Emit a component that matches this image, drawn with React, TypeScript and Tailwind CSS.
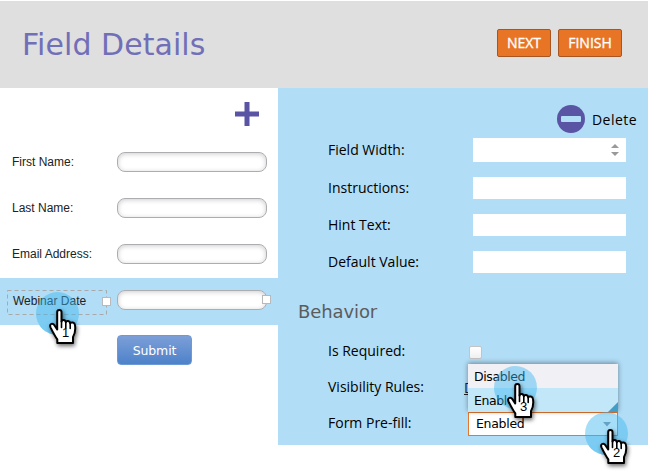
import React from "react";

const sans = "font-['Open_Sans','Noto_Sans',sans-serif]";
const wide = "font-['DejaVu_Sans',sans-serif]";
const helv = "font-['Liberation_Sans',Arial,sans-serif]";

function TopButton({ label, size }: { label: string; size: string }) {
  return (
    <button
      className={`${sans} ${size} flex h-7 items-center justify-center rounded-[2px] border border-[#a85521] bg-[#e87525] text-[14px] leading-none text-white [-webkit-text-stroke:0.35px_#fff]`}
    >
      {label}
    </button>
  );
}

function FormInput() {
  return (
    <div className="h-5 w-[150px] rounded-[8px] border border-[#acacb1] bg-white shadow-[inset_0_1px_5px_rgba(0,0,0,0.2)]" />
  );
}

function FormRow({ label }: { label: string }) {
  return (
    <div className={`${helv} flex h-[46px] items-center pl-3 text-[12px] text-[#222]`}>
      <span className="w-[105px] whitespace-nowrap">{label}</span>
      <FormInput />
    </div>
  );
}

function PropertyRow({
  label,
  height,
  children,
}: {
  label: string;
  height: string;
  children: React.ReactNode;
}) {
  return (
    <div className={`flex items-center ${height}`}>
      <span className={`${sans} w-[145px] shrink-0 text-[14px] leading-none whitespace-nowrap text-black`}>
        {label}
      </span>
      {children}
    </div>
  );
}

function Halo({ className, solidFrom }: { className: string; solidFrom?: number }) {
  return (
    <svg className={`absolute h-[43px] w-[43px] ${className}`} viewBox="0 0 43 43">
      <circle cx="21.5" cy="21.5" r="21.5" fill="#3db8f0" fillOpacity="0.46" />
      {solidFrom !== undefined && (
        <svg x="0" y={solidFrom} width="43" height={43 - solidFrom} viewBox={`0 ${solidFrom} 43 ${43 - solidFrom}`}>
          <circle cx="21.5" cy="21.5" r="21.5" fill="#78ccf3" />
        </svg>
      )}
    </svg>
  );
}

function Hand({ n, className }: { n: number; className: string }) {
  return (
    <div className={`absolute h-[40px] w-[32px] ${className}`}>
      <svg
        className="absolute inset-0 overflow-visible drop-shadow-[1px_2px_2px_rgba(0,0,0,0.6)]"
        width="32"
        height="40"
        viewBox="0 0 32 40"
      >
        <path
          d="M9.2 21.5V4C9.2 1.2 13.5 1.2 13.5 4V13.6C13.8 11.2 17.6 11.4 17.8 14.2C18.4 12.2 22 12.6 22.2 15.4C23 13.7 26.8 14.2 27 17.2C27.6 21.5 27.2 25.5 25 29V35H9.3V31.4C6.8 28 4.8 24 2.6 19.6C1 16 4.4 14.4 6.4 17.2Z"
          fill="#fff"
          stroke="#000"
          strokeWidth="2"
          strokeLinejoin="round"
        />
        <path d="M13.5 13V19.5M17.8 14V20M22.2 15.5V20.5" stroke="#000" strokeWidth="1.6" strokeLinecap="round" />
      </svg>
      <span className={`${helv} absolute top-[18px] left-[14px] text-[13px] leading-[14px] text-black`}>
        {n}
      </span>
    </div>
  );
}

export default function App() {
  return (
    <div className="relative h-[475px] w-[649px] overflow-hidden bg-white pt-px">
      <header className="flex h-[87px] w-[648px] items-center justify-between bg-[#dfdfdf] pr-[26px] pl-[22px]">
        <h1 className={`${wide} text-[30px] leading-none tracking-[0.05px] text-[#716fb7]`}>
          Field Details
        </h1>
        <div className="flex gap-[7px] pb-[3px]">
          <TopButton label="NEXT" size="w-[54px]" />
          <TopButton label="FINISH" size="w-[64px]" />
        </div>
      </header>

      <div className="flex w-[648px]">
        <section className="w-[278px]">
          <div className="flex h-[51px] justify-end pt-[14px] pr-[19px]">
            <svg width="24" height="24" viewBox="0 0 24 24">
              <path d="M12 0V24M0 12H24" stroke="#5a54a4" strokeWidth="5" />
            </svg>
          </div>
          <FormRow label="First Name:" />
          <FormRow label="Last Name:" />
          <FormRow label="Email Address:" />
          <div className="mt-[1px] flex h-[47px] bg-[#b1ddf6] pt-3 pl-[7px]">
            <div className="relative h-[25px] w-[100px]">
              <svg className="absolute inset-0" width="100" height="25">
                <rect x="0.5" y="0.5" width="99" height="24" fill="none" stroke="#a9a9a9" strokeDasharray="4 3" />
              </svg>
              <span className={`${helv} block pt-[2px] pl-[6px] text-[12px] leading-[18px] text-[#222]`}>
                Webinar Date
              </span>
              <i className="absolute top-[7px] left-[95px] h-[9px] w-[9px] border border-[#b9b9b9] bg-white" />
            </div>
            <div className="relative ml-[10px] h-5">
              <FormInput />
              <i className="absolute top-[5px] left-[145px] h-[9px] w-[9px] border border-[#b9b9b9] bg-white" />
            </div>
          </div>
          <button
            className={`${wide} mt-[10px] ml-[117px] flex h-[30px] w-[75px] items-center justify-center rounded-[4px] border border-[#6c9ad6] bg-linear-to-b from-[#7c9fd8] to-[#4d82ca] pt-[2px] text-[12.5px] tracking-[-0.1px] text-white`}
          >
            Submit
          </button>
        </section>

        <section className="h-[357px] w-[370px] bg-[#b1ddf6] pl-[50px]">
          <div className="flex h-[50px] items-center gap-[7px] pt-[12px] pl-[229px]">
            <svg width="28" height="28" viewBox="0 0 28 28">
              <circle cx="14" cy="14" r="14" fill="#5a54a4" />
              <rect x="4" y="11" width="20" height="6" rx="1" fill="#b1ddf6" />
            </svg>
            <span className={`${sans} pt-[2px] text-[14px] leading-none tracking-[0.45px] text-black`}>
              Delete
            </span>
          </div>
          <div className="flex flex-col gap-[15px]">
            <PropertyRow label="Field Width:" height="h-6">
              <div className="flex h-6 w-[153px] items-center justify-end bg-white pr-[7px]">
                <svg width="8" height="12" viewBox="0 0 8 12">
                  <path d="M4 0L8 4H0ZM0 8H8L4 12Z" fill="#999" />
                </svg>
              </div>
            </PropertyRow>
            <PropertyRow label="Instructions:" height="h-[22px]">
              <div className="h-[22px] w-[153px] bg-white" />
            </PropertyRow>
            <PropertyRow label="Hint Text:" height="h-[22px]">
              <div className="h-[22px] w-[153px] bg-white" />
            </PropertyRow>
            <PropertyRow label="Default Value:" height="h-[22px]">
              <div className="h-[22px] w-[153px] bg-white" />
            </PropertyRow>
          </div>
          <h2
            className={`${wide} mt-[29px] -ml-[30px] h-[31px] text-[18px] leading-[20px] tracking-[-0.1px] text-[#5c5c5c]`}
          >
            Behavior
          </h2>
          <PropertyRow label="Is Required:" height="h-[36px]">
            <i className="mt-[2px] -ml-[4px] h-[13px] w-[13px] rounded-[2px] border border-[#c4c4c4] bg-linear-to-b from-white to-[#f0f0f0]" />
          </PropertyRow>
          <PropertyRow label="Visibility Rules:" height="h-[36px]">
            <span className={`${sans} -ml-[9px] text-[14px] text-[#222] underline`}>D</span>
          </PropertyRow>
          <PropertyRow label="Form Pre-fill:" height="h-[36px]">
            <div className="relative mt-[2px] -ml-[5px] h-6 w-[150px] border border-[#e4762e] bg-white">
              <div className="flex h-full items-center justify-between pr-[6px] pl-[7px]">
                <span className={`${wide} pt-px text-[12.5px] tracking-[-0.3px] text-black`}>Enabled</span>
                <svg width="8" height="5" viewBox="0 0 8 5">
                  <path d="M0 0H8L4 4.5Z" fill="#8a9299" />
                </svg>
              </div>
              <div
                className={`${wide} absolute bottom-[23px] -left-px h-12 w-[150px] text-[12.5px] leading-[26px] tracking-[-0.4px] text-black shadow-[0_-1px_5px_rgba(0,0,0,0.4)]`}
              >
                <div className="h-6 bg-[#f1f1f5] pl-[6px]">Disabled</div>
                <div className="h-6 bg-[#c1e7f9] pl-[6px]">Enabled</div>
                <svg className="absolute right-0 bottom-0" width="10" height="10" viewBox="0 0 10 10">
                  <path d="M10 0V10H0Z" fill="#439dc6" />
                </svg>
              </div>
            </div>
          </PropertyRow>
        </section>
      </div>

      <Halo className="top-[292px] left-[36px]" solidFrom={33} />
      <Hand n={1} className="top-[308px] left-[48px]" />
      <Halo className="top-[366px] left-[494px]" />
      <Hand n={3} className="top-[382px] left-[506px]" />
      <Halo className="top-[412px] left-[585px]" solidFrom={33} />
      <Hand n={2} className="top-[428px] left-[599px]" />
    </div>
  );
}
